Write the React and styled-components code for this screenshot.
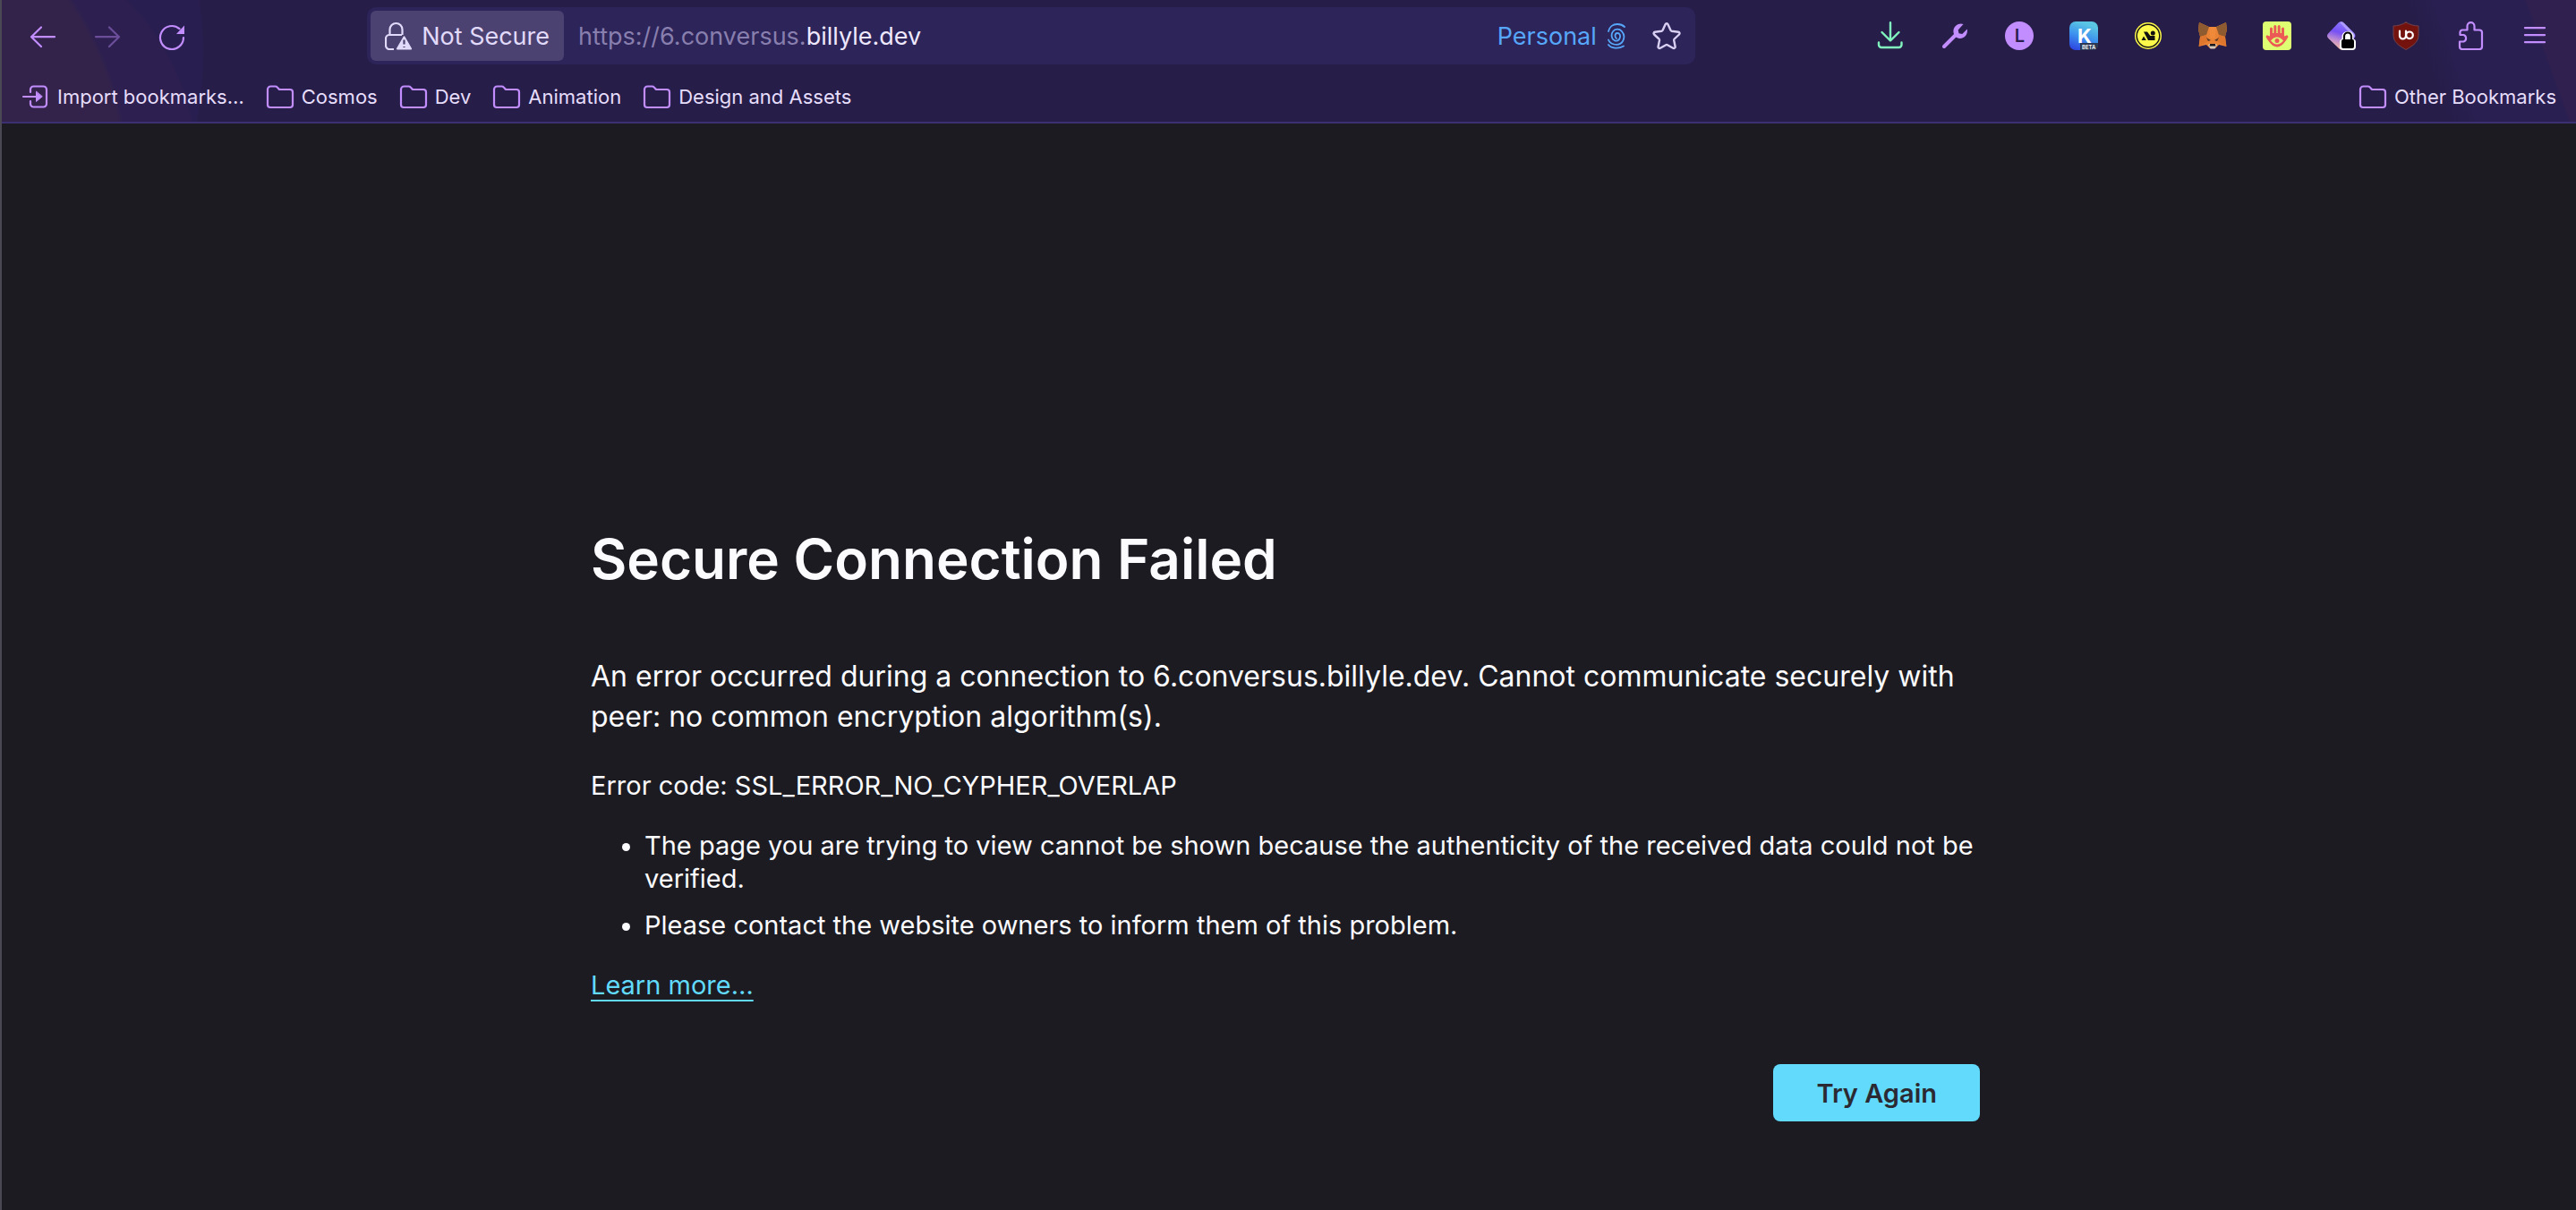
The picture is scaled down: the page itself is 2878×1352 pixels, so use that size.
import React from "react";
import styled, { createGlobalStyle } from "styled-components";

const Global = createGlobalStyle`
  *, *::before, *::after { box-sizing: border-box; }
  body {
    margin: 0;
    background: #1c1b22;
    font-family: Inter, "Liberation Sans", sans-serif;
  }
`;

const Window = styled.div`
  display: flex;
  flex-direction: column;
  min-height: 100vh;
  border-left: 2px solid #4a4853;
  background: #1c1b22;
`;

const Chrome = styled.header`
  border-bottom: 2px solid #3c3073;
  background:
    radial-gradient(ellipse 560px 420px at -420px 190px, #33234b 0 99%, transparent 100%),
    radial-gradient(ellipse 220px 260px at 0 200px, #2d2050 0 99%, transparent 100%),
    radial-gradient(ellipse 226px 300px at 0 60px, #291e50 0 99%, transparent 100%),
    linear-gradient(250deg, #2f2050 0 52px, #291f50 54px 150px, transparent 180px),
    #271d49;
`;

const NavBar = styled.nav`
  display: flex;
  align-items: center;
  height: 80px;
  padding: 0 10px;
`;

const ButtonGroup = styled.div`
  display: flex;
`;

const Spring = styled.div`
  flex: 10 1 0;
`;

const ToolButton = styled.button`
  display: flex;
  align-items: center;
  justify-content: center;
  width: 72px;
  height: 64px;
  padding: 0;
  border: 0;
  background: none;
  color: ${(p) => p.$color || "#c28dff"};
  opacity: ${(p) => (p.disabled ? 0.42 : 1)};
`;

const UrlBar = styled.form`
  flex: 81 1 0;
  display: flex;
  align-items: center;
  height: 64px;
  padding: 4px;
  border-radius: 10px;
  background: #2d2459;
  color: #e2dafa;
  font-size: 27px;
`;

const Identity = styled.button`
  display: flex;
  align-items: center;
  gap: 9px;
  height: 56px;
  padding: 0 16px;
  border: 0;
  border-radius: 6px;
  background: #4b4271;
  color: #e2dafa;
  font: inherit;
  white-space: nowrap;
`;

const UrlPrefix = styled.label`
  margin-left: 16px;
  color: #887fae;
`;

const UrlInput = styled.input`
  flex: 1;
  min-width: 0;
  padding: 0;
  border: 0;
  outline: 0;
  background: none;
  color: #eee8ff;
  font: inherit;
`;

const Container = styled.button`
  display: flex;
  align-items: center;
  gap: 12px;
  padding: 0;
  border: 0;
  background: none;
  color: #57a7fb;
  font: inherit;
`;

const StarButton = styled.button`
  display: flex;
  margin: 0 12px 0 30px;
  padding: 0;
  border: 0;
  background: none;
  color: #d9cff2;
`;

const BookmarkBar = styled.div`
  display: flex;
  align-items: center;
  gap: 24px;
  height: 56px;
  padding: 0 22px;
`;

const Bookmark = styled.button`
  display: flex;
  align-items: center;
  gap: 8px;
  margin-left: ${(p) => (p.$end ? "auto" : 0)};
  padding: 0;
  border: 0;
  background: none;
  color: #e6ddfb;
  font: inherit;
  font-size: 22px;
  line-height: 28px;
  white-space: nowrap;

  svg { color: #c28dff; }
`;

const Page = styled.main`
  flex: 1;
  display: flex;
  flex-direction: column;
  justify-content: center;
  align-items: center;
  padding: 348px 8px 0 0;
  color: #fbfbfe;
`;

const Article = styled.article`
  width: 100%;
  max-width: 1552px;
  font-size: 29px;
  line-height: 37px;
`;

const Title = styled.h1`
  margin: 0 0 68px;
  font-size: 62px;
  font-weight: 600;
  line-height: 80px;
`;

const Lead = styled.p`
  margin: 0 0 36px;
  font-size: 32px;
  line-height: 45px;
`;

const ErrorCode = styled.p`
  margin: 0 0 30px;
`;

const Reasons = styled.ul`
  margin: 0 0 30px;
  padding-left: 60px;
`;

const Reason = styled.li`
  & + & { margin-top: 15px; }
`;

const LearnMore = styled.a`
  color: #61dafb;
  text-decoration: underline;
  text-decoration-thickness: 2px;
  text-underline-offset: 6px;
`;

const Actions = styled.div`
  display: flex;
  justify-content: flex-end;
  margin-top: 70px;
`;

const TryAgain = styled.button`
  height: 64px;
  padding: 0 48px;
  border: 0;
  border-radius: 8px;
  background: #61dafb;
  color: #2b2a33;
  font: inherit;
  font-weight: 600;
`;

const Icon = ({ w = 32, h = 32, children }) => (
  <svg width={w} height={h} viewBox={`0 0 ${w} ${h}`} fill="none" stroke="currentColor"
    strokeWidth="2.2" strokeLinecap="round" strokeLinejoin="round" aria-hidden="true">
    {children}
  </svg>
);

const BackIcon = () => <Icon><path d="M29 17.2H3M14 6.5 3 17.2 14 28" /></Icon>;
const ForwardIcon = () => <Icon><path d="M3 17.2h26M18 6.5l11 10.7L18 28" /></Icon>;
const ReloadIcon = () => (
  <Icon>
    <path d="M29 18a13 13 0 1 1-4.500-9.800" />
    <path d="M21 14h9V4.500z" fill="currentColor" stroke="none" />
  </Icon>
);
const LockWarning = () => (
  <Icon>
    <path d="M5.500 15V9a7 7 0 0 1 14 0v6M10 31H5a4 4 0 0 1-4-4v-8a4 4 0 0 1 4-4h14" strokeLinecap="butt" />
    <path d="M21.500 17.500 29 30.500H14z" fill="currentColor" />
    <path d="M21.500 20.500v5M21.500 28v1" stroke="#4b4271" strokeLinecap="butt" />
  </Icon>
);
const Fingerprint = () => (
  <Icon w={20}>
    <path strokeWidth="1.8" d="M1 11C2 6 6 3 11 3c3 0 6 1 8 3M10 19c-2-1-2.300-5.600.8-6 3-.2 3.700 3 3 5.200-.8 3.300-4 4.300-6.300 2.800-3.400-2-3.700-6.700-1.500-9.700 2.400-3.200 7-3.500 9.800-.5 3 3.300 3.200 7.500 1.200 11.200-2 3.300-6 4.500-10 3.500-3-.8-5-2.500-6-5M1 26c3 4 11 5 17 1.500" />
  </Icon>
);
const Star = () => (
  <Icon>
    <path strokeWidth="2.400" d="M14.600 3.200c.6-1.300 2.300-1.300 2.900 0l3.100 6.700c.2.500.7.800 1.200.9l7.300.9c1.400.2 1.900 1.800.9 2.800l-5.300 5c-.4.400-.6.900-.5 1.500l1.400 7c.3 1.400-1.200 2.400-2.400 1.700l-6.300-3.500a1.700 1.700 0 0 0-1.700 0l-6.300 3.500c-1.200.7-2.600-.3-2.300-1.700l1.400-7c.1-.6-.1-1.100-.5-1.500l-5.400-5c-1-1-.5-2.600.9-2.800l7.300-.9c.5-.1 1-.4 1.200-.9z" />
  </Icon>
);
const ImportIcon = () => (
  <Icon>
    <path d="M10 11V8a3.500 3.500 0 0 1 3.500-3.500h11A3.500 3.500 0 0 1 28 8v16a3.500 3.500 0 0 1-3.500 3.500h-11A3.500 3.500 0 0 1 10 24v-3M2 16h16" />
    <path d="M16.500 10.500v11L23 16z" fill="currentColor" strokeWidth="1" />
  </Icon>
);
const Folder = () => (
  <Icon>
    <path d="M2 8a3.500 3.500 0 0 1 3.500-3.500h5c1 0 1.800.4 2.400 1.100l1.400 1.600c.4.500 1 .8 1.700.8h11A3 3 0 0 1 30 11v14a3 3 0 0 1-3 3H5a3 3 0 0 1-3-3z" />
  </Icon>
);
const Download = () => (
  <Icon>
    <path strokeWidth="2.400" d="M16 1.200v20M6.500 12l9.500 9.500 9.500-9.500M3 23.500V26a3 3 0 0 0 3 3h19.500a3 3 0 0 0 3-3v-2.500" />
  </Icon>
);
const Wrench = () => (
  <Icon>
    <path d="M4 28 17 15" strokeWidth="4" />
    <path fill="currentColor" stroke="none" d="M25.500 3a8.300 8.300 0 0 0-11 9c.3 3.600 3.200 6.800 7 7 5 .3 9.300-4.500 8.300-10.500L24.300 14l-3.800-.8-.8-3.800z" />
  </Icon>
);
const Account = () => (
  <Icon>
    <circle cx="16" cy="16" r="16" fill="#c28dff" stroke="none" />
    <text x="16.500" y="23" textAnchor="middle" fill="#2b1f50" stroke="none" fontFamily="Inter" fontSize="20" fontWeight="600">L</text>
  </Icon>
);
const Keplr = () => (
  <Icon>
    <defs>
      <linearGradient id="keplr" x1="0" y1="1" x2=".35" y2="0">
        <stop offset="0" stopColor="#2b3be0" /><stop offset=".55" stopColor="#3c91ee" /><stop offset="1" stopColor="#5bc6e4" />
      </linearGradient>
    </defs>
    <rect width="32" height="32" rx="7" fill="url(#keplr)" stroke="none" />
    <text x="9" y="24" fill="#fff" stroke="none" fontFamily="Inter" fontSize="22" fontWeight="700">K</text>
    <path d="M12 24h20v3a5 5 0 0 1-5 5H12z" fill="#2b3854" stroke="none" />
    <text x="14" y="30.500" fill="#fff" stroke="none" fontFamily="Inter" fontSize="6" fontWeight="600">BETA</text>
  </Icon>
);
const YellowCoin = () => (
  <Icon>
    <circle cx="16" cy="16" r="15" fill="#fdf94a" stroke="none" />
    <circle cx="16" cy="16" r="12.800" stroke="#151515" strokeWidth="1.500" />
    <path d="M8.500 21 11 16.500l2.800 4.500zM11 11.500h4l4.500 6V21h-3.500zM18.500 16h5v5h-5z" fill="#111" stroke="none" />
    <circle cx="21.300" cy="13" r="2.500" fill="#111" stroke="none" />
  </Icon>
);
const Fox = () => (
  <Icon>
    <g stroke="none">
      <path d="M1 1l11 5h8l11-5 1 8-2 8 1.500 11-8.500-2-4 4h-6l-4-4-8.500 2L2 17 0 9z" fill="#e88235" />
      <path d="M1 1l11 5-3 9-7 2L0 9zM31 1 20 6l3 9 7 2 2-8z" fill="#8e5a30" />
      <path d="M12 6h8l-1.500 13h-5z" fill="#f08a3a" />
      <path d="M2 17l7-2 2 7-10 6zM30 17l-7-2-2 7 10 6z" fill="#df762d" />
      <path d="M9 18l5 3-3 1zM23 18l-5 3 3 1z" fill="#5b3a2b" />
      <path d="M11 26l2-1h6l2 1-2.500 4.500h-5z" fill="#d8c8b8" />
      <path d="M13.200 25h5.600l.7 2.500h-7z" fill="#17181c" />
    </g>
  </Icon>
);
const Hand = () => (
  <Icon>
    <rect width="32" height="32" rx="4" fill="#deff72" stroke="none" />
    <path stroke="#ec5a55" strokeWidth="3" d="M9.500 17V8M13.800 15V5.500M18.200 15V5.500M22.500 17V8" />
    <path fill="#ec5a55" stroke="none" d="M8 13h16v3.500l2-.8c1.800-.4 3 .8 2 2.300C25 23 21 28.500 16 28.500S7 23 4 18c-1-1.500.2-2.700 2-2.300l2 .8z" />
    <path fill="#deff72" stroke="none" d="M9 21.500q7-8 14 0-7 8-14 0z" />
    <circle cx="16" cy="21.500" r="2.500" fill="#ec5a55" stroke="none" />
  </Icon>
);
const Prism = () => (
  <Icon>
    <defs>
      <linearGradient id="prism" x1=".6" y1="0" x2=".3" y2="1">
        <stop offset="0" stopColor="#8f7cff" /><stop offset=".4" stopColor="#7650f4" /><stop offset=".7" stopColor="#c391cf" /><stop offset="1" stopColor="#ffc29a" />
      </linearGradient>
    </defs>
    <path d="M13 1q3-2 6 1l11 11q3 3 0 6L19 30q-3 3-6 0L1.500 19q-3-3 0-6z" fill="url(#prism)" stroke="none" />
    <path d="M14 1q3-2 5 1l11 11q2 3 0 5z" fill="#ad9bff" stroke="none" />
    <path d="M14 23q0-3 2.500-3.500V17c0-8 13-8 13 0v2.500Q32 20 32 23v5q0 4-4 4H18q-4 0-4-4z" fill="#fff" stroke="none" />
    <rect x="16" y="20" width="14" height="10" rx="2" fill="#000" stroke="none" />
    <path d="M19 21v-4.500a4 4 0 0 1 8 0V21" stroke="#000" />
  </Icon>
);
const Shield = () => (
  <Icon>
    <path d="M16 1c4.500 2.600 9 3.800 14 4v10c0 8-6 12-14 16.500C8 27 2 23 2 15V5c5-.2 9.500-1.400 14-4z" fill="#74120e" stroke="#74424a" strokeWidth="1" />
    <path d="M9 10.500v5.500a3.500 3.500 0 0 0 7 0v-1.500M16 10.500v5" stroke="#fff" />
    <circle cx="20" cy="15.300" r="3.800" stroke="#fff" />
  </Icon>
);
const Puzzle = () => (
  <Icon>
    <path d="M4.500 13.500V12a2.500 2.500 0 0 1 2.500-2.500h5.500V5.200a4 4 0 0 1 8 0v4.300H26a3 3 0 0 1 3 3V28a3 3 0 0 1-3 3H7a3 3 0 0 1-3-3v-5.500h4.500a4 4 0 0 0 0-7.500H4.500z" />
  </Icon>
);
const Menu = () => <Icon><path d="M5 7.200h22M5 15.200h22M5 23.200h22" /></Icon>;

const extensions = [
  ["Downloads", Download, "#80f5bd"],
  ["Developer tools", Wrench],
  ["Account", Account],
  ["Keplr", Keplr],
  ["Coin wallet", YellowCoin],
  ["MetaMask", Fox],
  ["Ad guard", Hand],
  ["Private prism", Prism],
  ["uBlock Origin", Shield],
  ["Extensions", Puzzle],
  ["Open menu", Menu],
];

const folders = ["Cosmos", "Dev", "Animation", "Design and Assets"];

export default function App() {
  return (
    <Window>
      <Global />
      <Chrome>
        <NavBar>
          <ButtonGroup>
            <ToolButton aria-label="Back"><BackIcon /></ToolButton>
            <ToolButton aria-label="Forward" disabled><ForwardIcon /></ToolButton>
            <ToolButton aria-label="Reload"><ReloadIcon /></ToolButton>
          </ButtonGroup>
          <Spring />
          <UrlBar onSubmit={(e) => e.preventDefault()}>
            <Identity type="button"><LockWarning />Not Secure</Identity>
            <UrlPrefix htmlFor="url">https://6.conversus.</UrlPrefix>
            <UrlInput id="url" type="text" defaultValue="billyle.dev" />
            <Container type="button">Personal<Fingerprint /></Container>
            <StarButton type="button" aria-label="Bookmark this page"><Star /></StarButton>
          </UrlBar>
          <Spring />
          <ButtonGroup>
            {extensions.map(([name, Glyph, color]) => (
              <ToolButton key={name} aria-label={name} $color={color}><Glyph /></ToolButton>
            ))}
          </ButtonGroup>
        </NavBar>
        <BookmarkBar>
          <Bookmark><ImportIcon />Import bookmarks…</Bookmark>
          {folders.map((name) => (
            <Bookmark key={name}><Folder />{name}</Bookmark>
          ))}
          <Bookmark $end><Folder />Other Bookmarks</Bookmark>
        </BookmarkBar>
      </Chrome>
      <Page>
        <Article>
          <Title>Secure Connection Failed</Title>
          <Lead>
            An error occurred during a connection to 6.conversus.billyle.dev. Cannot communicate securely with
            peer: no common encryption algorithm(s).
          </Lead>
          <ErrorCode>Error code: SSL_ERROR_NO_CYPHER_OVERLAP</ErrorCode>
          <Reasons>
            <Reason>
              The page you are trying to view cannot be shown because the authenticity of the received data could not be
              verified.
            </Reason>
            <Reason>Please contact the website owners to inform them of this problem.</Reason>
          </Reasons>
          <LearnMore href="#learn-more">Learn more…</LearnMore>
          <Actions><TryAgain>Try Again</TryAgain></Actions>
        </Article>
      </Page>
    </Window>
  );
}
